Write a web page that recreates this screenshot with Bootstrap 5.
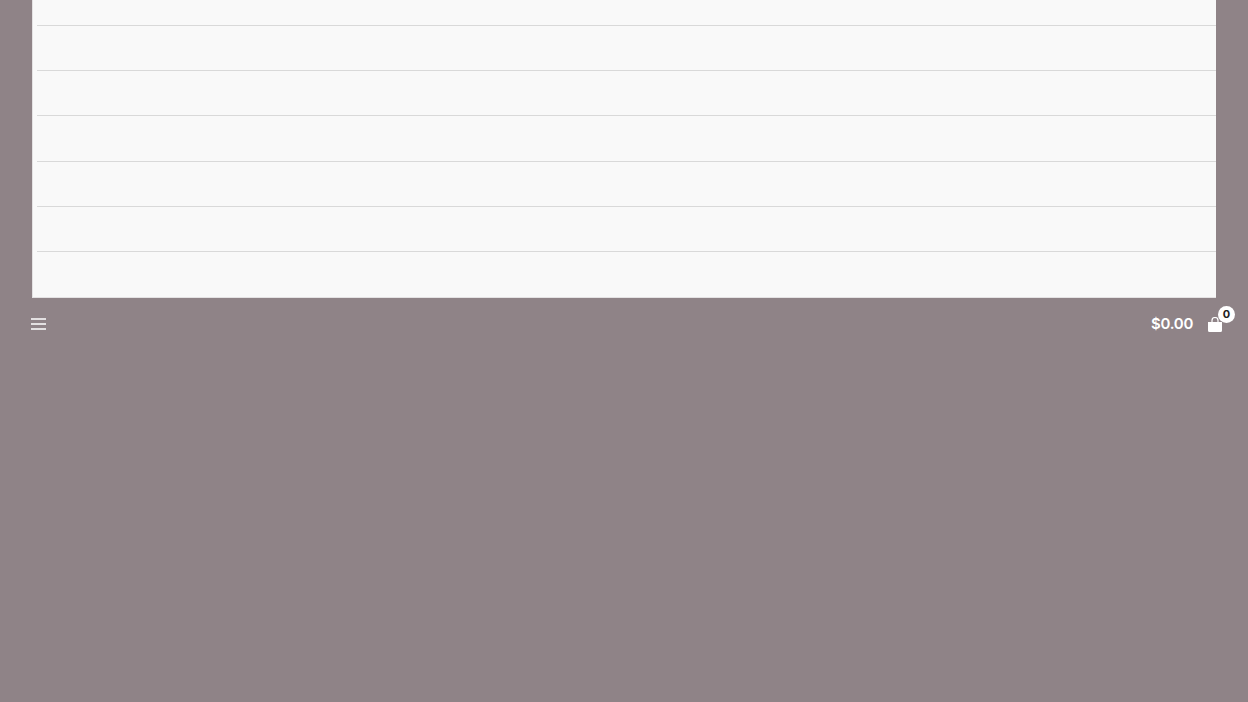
<!DOCTYPE html>
<html lang="en">
<head>
  <meta charset="UTF-8">
  <meta name="viewport" content="width=device-width, initial-scale=1">
  <title>Shop</title>
  <link href="https://cdn.jsdelivr.net/npm/bootstrap@5.3.0/dist/css/bootstrap.min.css" rel="stylesheet">
  <style>
    body {
        background-color: #8f8387;
        font-family: "Inter", "Liberation Sans", sans-serif;
        overflow: hidden;
    }
    .sheet {
        margin: 0 32px;
        height: 298px;
        background: #f9f9f9;
        border-left: 1px solid #e4e2e3;
        border-bottom: 1px solid #e4e2e3;
        padding-left: 4px;
    }
    .sheet-row {
        height: 45.33px;
        border-bottom: 1px solid #d9d9d9;
    }
    .sheet-row:first-child { height: 26px; }
    .sheet-row:last-child { border-bottom: 0; height: 45px; }
    .bottom-bar {
        height: 52px;
        padding: 0 26px 0 31px;
        color: #fff;
    }
    .cart-total {
        font-size: 15px;
        font-weight: 600;
        letter-spacing: -0.3px;
        margin-right: 15px;
    }
    .cart-bag { position: relative; width: 14px; height: 15px; margin-top: 1px; }
    .cart-count {
        position: absolute;
        top: -11px;
        left: 10px;
        width: 17px;
        height: 17px;
        border-radius: 50%;
        background: #fff;
        color: #222;
        font-size: 11px;
        font-weight: 700;
        line-height: 17px;
        text-align: center;
    }
  </style>
</head>
<body>

<div class="sheet d-flex flex-column">
  <div class="sheet-row"></div>
  <div class="sheet-row"></div>
  <div class="sheet-row"></div>
  <div class="sheet-row"></div>
  <div class="sheet-row"></div>
  <div class="sheet-row"></div>
  <div class="sheet-row"></div>
</div>

<div class="bottom-bar d-flex align-items-center justify-content-between">
  <svg width="15" height="12" viewBox="0 0 15 12" aria-label="Menu">
    <path d="M0 1h15M0 6h15M0 11h15" stroke="#fff" stroke-width="1.4"/>
  </svg>
  <div class="d-flex align-items-center">
    <span class="cart-total">$0.00</span>
    <div class="cart-bag">
      <svg class="d-block" width="14" height="15" viewBox="0 0 14 15">
        <path d="M4 5V3.5a3 3 0 0 1 6 0V5" fill="none" stroke="#fff" stroke-width="1.2"/>
        <path d="M0 5h14v8.5a1.5 1.5 0 0 1-1.5 1.5h-11A1.5 1.5 0 0 1 0 13.500z" fill="#fff"/>
      </svg>
      <span class="cart-count">0</span>
    </div>
  </div>
</div>

<script src="https://cdn.jsdelivr.net/npm/bootstrap@5.3.0/dist/js/bootstrap.bundle.min.js"></script>
</body>
</html>
